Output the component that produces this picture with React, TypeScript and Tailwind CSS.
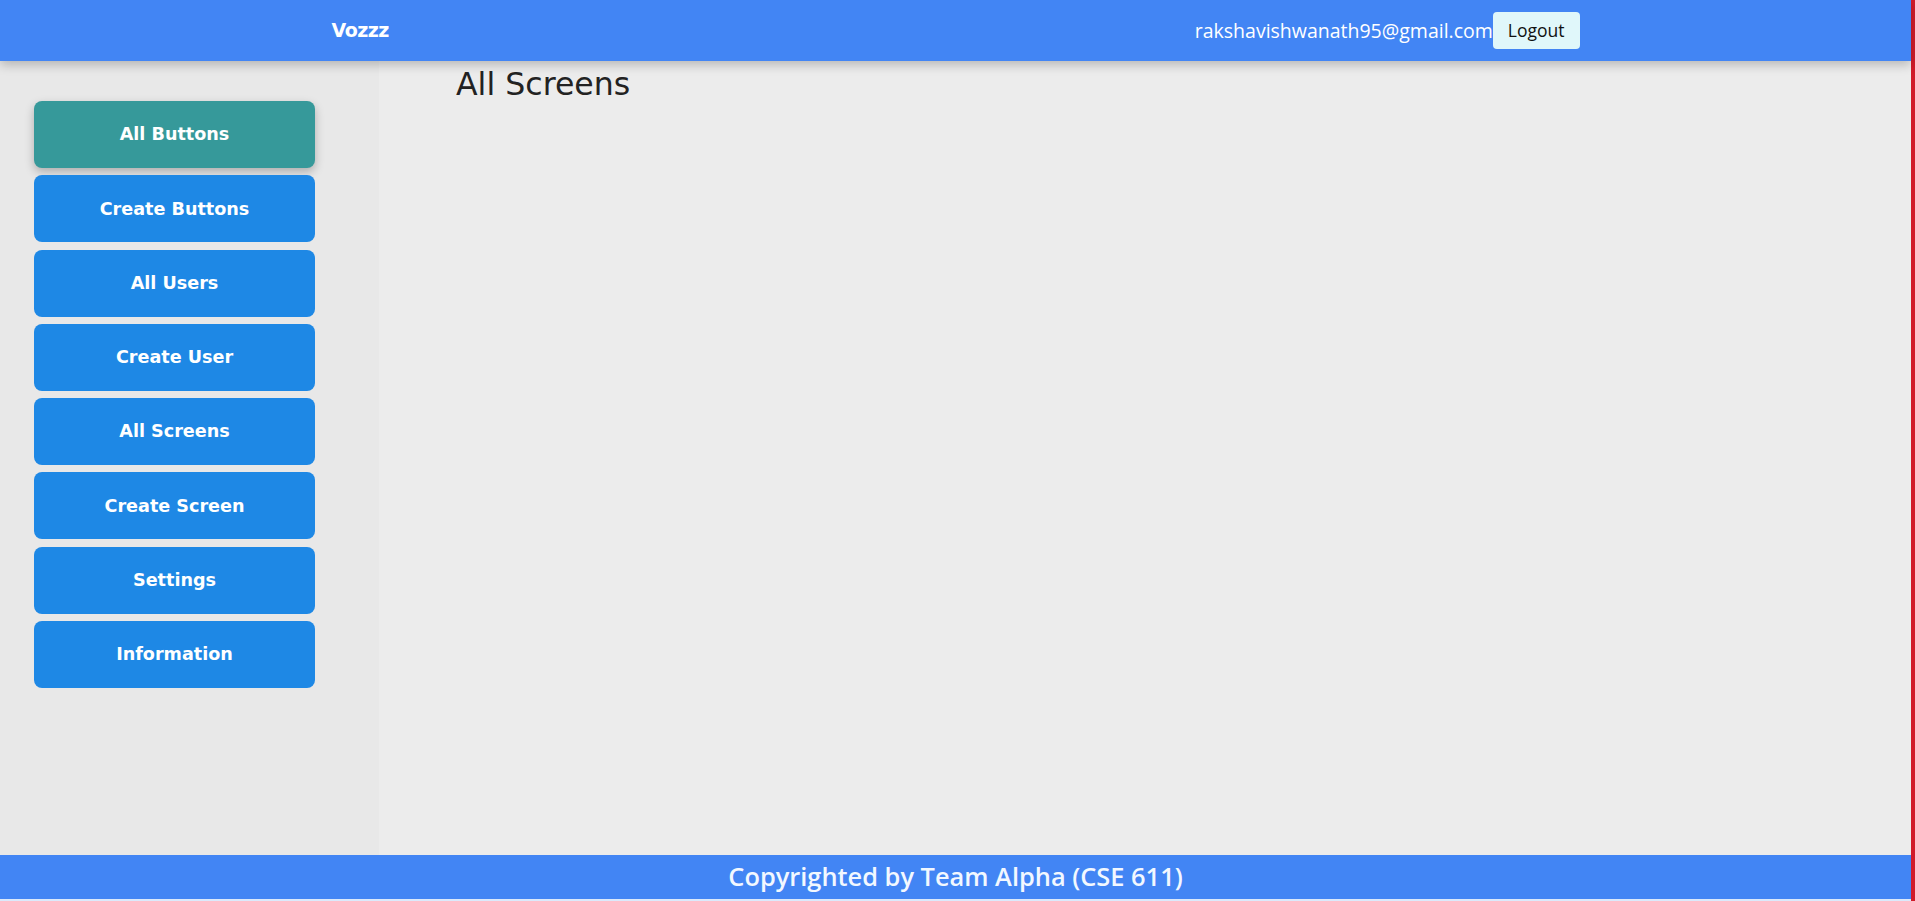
const NAV = [
  'All Buttons',
  'Create Buttons',
  'All Users',
  'Create User',
  'All Screens',
  'Create Screen',
  'Settings',
  'Information',
];

function Header() {
  return (
    <header className="relative z-10 h-[61px] shrink-0 bg-[#4285f4] shadow-[0_4px_10px_rgba(0,0,0,0.22)]">
      <div className="mx-auto flex h-full w-[1248px] items-center justify-between">
        <span className="font-['DejaVu_Sans',sans-serif] text-[19px] font-bold tracking-[-0.5px] text-white">
          Vozzz
        </span>
        <div className="flex items-center">
          <span className="font-['Open_Sans',sans-serif] text-[19.5px] text-white">
            rakshavishwanath95@gmail.com
          </span>
          <button className="h-[37px] rounded-[4px] bg-[#e0f7fa] px-[15px] font-['Open_Sans',sans-serif] text-[17.5px] text-[#111]">
            Logout
          </button>
        </div>
      </div>
    </header>
  );
}

function Sidebar({ active }: { active: string }) {
  return (
    <aside className="flex w-[379px] shrink-0 flex-col gap-[7.3px] bg-[#e8e8e8] px-[34px] pt-[40px]">
      {NAV.map((label) => (
        <button
          key={label}
          className={
            label === active
              ? "h-[67px] w-[281px] rounded-[8px] bg-[#36999a] font-['DejaVu_Sans',sans-serif] text-[17.6px] font-bold text-white shadow-[0_4px_10px_rgba(0,0,0,0.25)]"
              : "h-[67px] w-[281px] rounded-[8px] bg-[#1e88e5] font-['DejaVu_Sans',sans-serif] text-[17.6px] font-bold text-white"
          }
        >
          {label}
        </button>
      ))}
    </aside>
  );
}

export default function App() {
  return (
    <div className="flex h-[901px] w-full overflow-hidden">
      <div className="flex min-w-0 flex-1 flex-col bg-[#ececec]">
        <Header />
        <div className="flex flex-1">
          <Sidebar active="All Buttons" />
          <main className="flex-1 bg-[#ececec] pl-[77px] pt-[4px]">
            <h1 className="font-['DejaVu_Sans',sans-serif] text-[31.6px] leading-[38px] text-[#222]">
              All Screens
            </h1>
          </main>
        </div>
        <footer className="flex h-[44px] shrink-0 items-center justify-center bg-[#4285f4] pb-[3px]">
          <span className="font-['Open_Sans',sans-serif] text-[25.4px] font-semibold leading-[30px] text-[#f2f8ff]">
            Copyrighted by Team Alpha (CSE 611)
          </span>
        </footer>
        <div className="h-[2px] shrink-0 bg-[#dbe9fb]" />
      </div>
      <div className="w-[4px] shrink-0 bg-[#d11a2a]" />
    </div>
  );
}
